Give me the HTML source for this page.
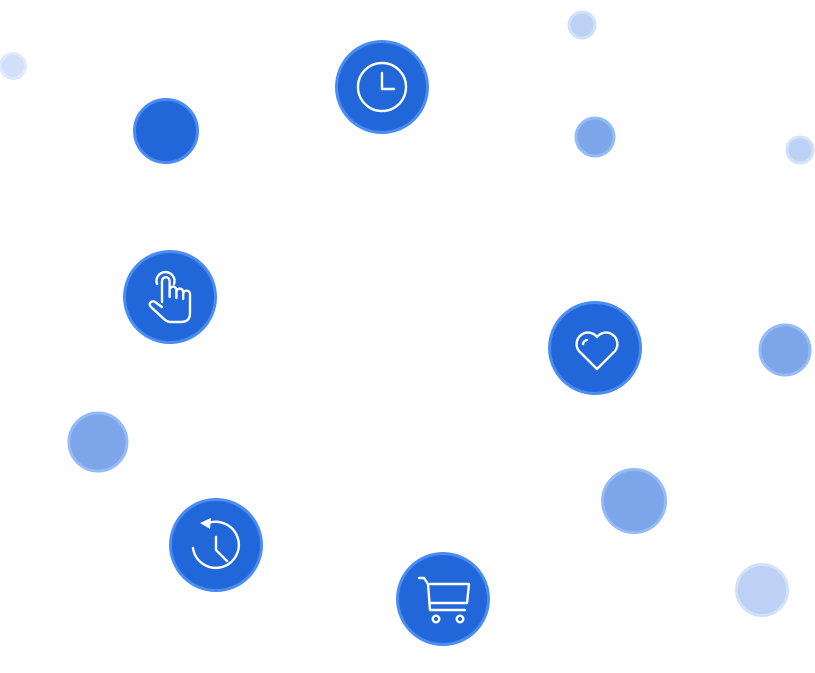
<!DOCTYPE html>
<html><head><style>html,body{margin:0;padding:0;background:#fff;width:815px;height:673px;overflow:hidden}</style></head>
<body>
<svg width="815" height="673" viewBox="0 0 815 673" xmlns="http://www.w3.org/2000/svg">
<g stroke-width="3">
<circle cx="13" cy="66" r="12.5" fill="#d3e0f8" stroke="#e0e9fb"/>
<circle cx="582" cy="25" r="13" fill="#bdd1f5" stroke="#d2e0fa"/>
<circle cx="800" cy="150" r="13" fill="#bdd1f5" stroke="#d2e0fa"/>
<circle cx="762" cy="590" r="25.5" fill="#bdd1f5" stroke="#d2e0fa"/>
<circle cx="595" cy="137" r="19" fill="#7ca5ea" stroke="#94bbf8"/>
<circle cx="785" cy="350" r="25" fill="#7ca5ea" stroke="#94bbf8"/>
<circle cx="98" cy="442" r="29" fill="#7ca5ea" stroke="#94bbf8"/>
<circle cx="634" cy="501" r="31.5" fill="#7ca5ea" stroke="#94bbf8"/>
<circle cx="166" cy="131" r="31.5" fill="#2167d9" stroke="#4a8cf2"/>
<circle cx="382" cy="87" r="45.5" fill="#2167d9" stroke="#4a8cf2"/>
<circle cx="170" cy="297" r="45.5" fill="#2167d9" stroke="#4a8cf2"/>
<circle cx="595" cy="348" r="45.5" fill="#2167d9" stroke="#4a8cf2"/>
<circle cx="216" cy="545" r="45.5" fill="#2167d9" stroke="#4a8cf2"/>
<circle cx="443" cy="599" r="45.5" fill="#2167d9" stroke="#4a8cf2"/>
</g>
<g fill="none" stroke="#fff" stroke-width="2.4" stroke-linecap="round" stroke-linejoin="round">
<circle cx="382" cy="87" r="24"/>
<path d="M382 73 V89 H394"/>
<path d="M162 302 V281 a3.8 3.8 0 0 1 7.6 0 V297 M169.6 290 a3.4 3.4 0 0 1 6.8 0 V298 M176.4 292 a3.4 3.4 0 0 1 6.8 0 V299 M183.2 294 a3.4 3.4 0 0 1 6.8 0 V313 q0 9 -9 9 H171 q-4 0 -7 -3 l-13 -12 a3 3 0 0 1 4 -5 l7 5"/>
<path d="M157 284 a9 9 0 1 1 17 0"/>
<path d="M597 369 L579 351 a10.5 10.5 0 0 1 18 -14 a10.5 10.5 0 0 1 18 14 Z"/>
<path d="M583 344 a5 5 0 0 1 4 -4"/>
<path d="M193 548 A23 23 0 1 0 206 524"/>
<path d="M216 537 V550 L227 561"/>
<path d="M419 578 H424 L428 584 L430 610 H465 M430 584 H469 L467 603 H431"/>
<circle cx="436" cy="619" r="3.3"/>
<circle cx="460" cy="619" r="3.3"/>
</g>
<path d="M200 523 L211 518 L210 529 Z" fill="#fff"/>
</svg>
</body></html>
